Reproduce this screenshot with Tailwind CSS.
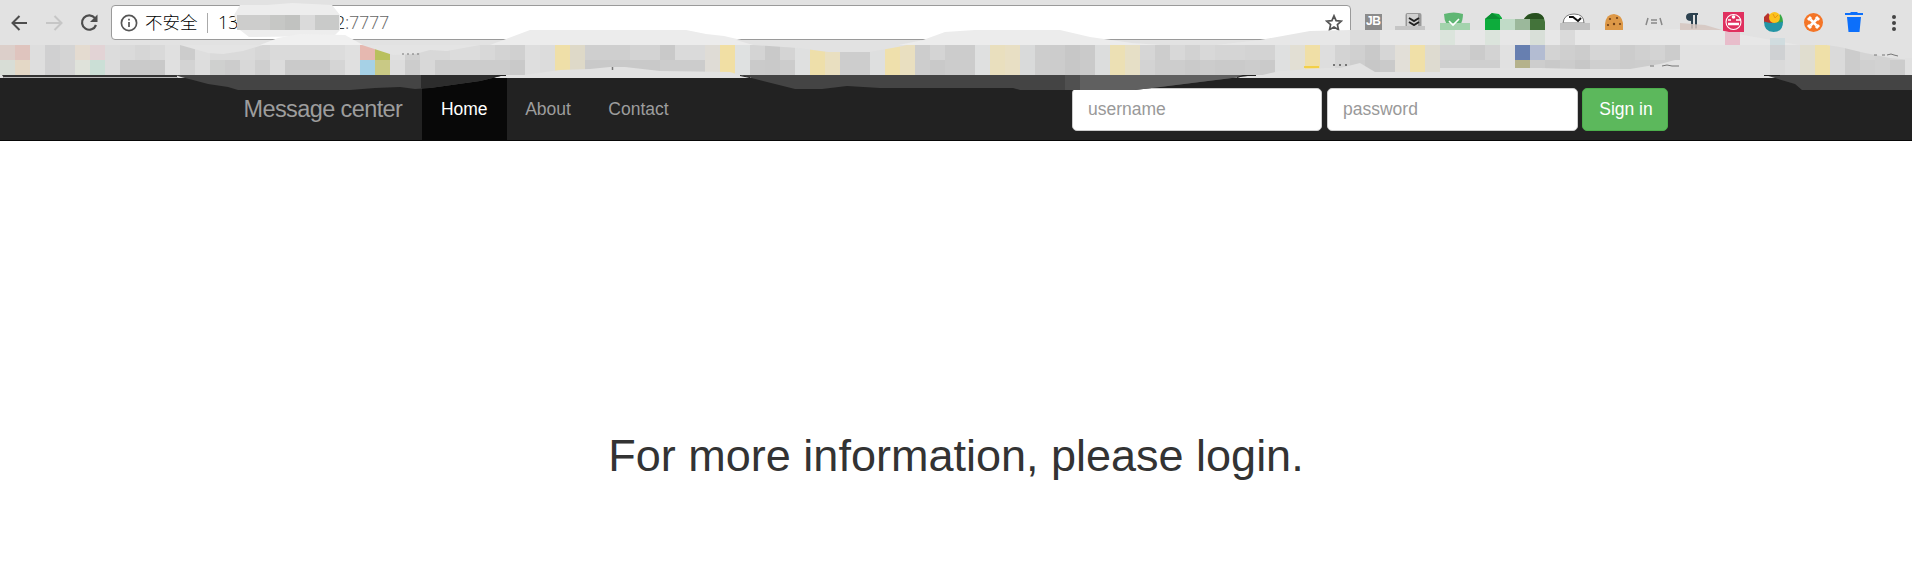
<!DOCTYPE html>
<html lang="en">
<head>
<meta charset="utf-8">
<title>Message center</title>
<script src="https://cdn.jsdelivr.net/npm/@tailwindcss/browser@4"></script>
</head>
<body class="relative h-[565px] w-[1912px] overflow-hidden bg-white font-['Liberation_Sans',sans-serif] text-[17.5px] text-[#333]">
<header class="flex h-[78px] items-start bg-[#e2e2e2] pt-[5px]">
  <div class="flex h-[35px] w-[111px] items-center gap-[15px] pl-[9px]">
    <svg class="size-5" viewBox="0 0 20 20" fill="none" stroke="#4d4d4d" stroke-width="2"><path d="M18 10H4M10.500 3 3.500 10l7 7"/></svg>
    <svg class="size-5" viewBox="0 0 20 20" fill="none" stroke="#c6c6c6" stroke-width="2"><path d="M2 10h15M10.500 3l7 7-7 7"/></svg>
    <svg class="size-5" viewBox="0 0 20 20" fill="none" stroke="#4d4d4d" stroke-width="2.200"><path d="M16 5.200A7.200 7.200 0 1 0 17 12"/><path d="M18.500 1.500v7.500H11z" fill="#4d4d4d" stroke="none"/></svg>
  </div>
  <div class="flex h-[35px] w-[1240px] items-center rounded border border-[#9a9a9a] bg-white pr-[7px] pl-[8px]">
    <svg class="size-[18px]" viewBox="0 0 18 18" fill="none" stroke="#555" stroke-width="1.700"><circle cx="9" cy="9" r="7.600"/><path d="M9 8v5M9 4.800v1.800"/></svg>
    <span class="ml-[7px] w-[54px] font-['Noto_Sans_CJK_SC',sans-serif] text-[17.5px] font-light whitespace-nowrap text-black">不安全</span>
    <span class="ml-[8px] h-5 w-px bg-[#aaa]"></span>
    <span class="ml-[10px] w-[117px] font-['Open_Sans',sans-serif] text-[18px] font-light text-black">13</span>
    <span class="font-['Open_Sans',sans-serif] text-[18px] font-light tracking-[-0.3px] text-black">2<span class="text-[#666]">:7777</span></span>
    <svg class="ml-auto size-[18px]" viewBox="0 0 18 18" fill="none" stroke="#555" stroke-width="1.700"><path d="m9 1.800 2.100 4.800 5.200.5-3.900 3.500 1.100 5.200L9 13.100l-4.500 2.700 1.100-5.200-3.900-3.500 5.200-.5z"/></svg>
  </div>
</header>

<nav class="flex h-[64px] border-b border-white bg-[#222] pl-[243.5px] text-[#9d9d9d] shadow-[inset_0_-1px_0_#080808]">
  <a class="flex w-[178px] items-center text-[23.5px] tracking-[-0.6px] whitespace-nowrap">Message center</a>
  <a class="flex w-[85.5px] items-center justify-center bg-[#080808] text-white">Home</a>
  <a class="flex w-[82px] items-center justify-center">About</a>
  <a class="flex w-[99px] items-center justify-center">Contact</a>
  <form class="ml-[384px] flex items-start gap-[5px] pt-[10px]">
    <input class="h-[43px] w-[250px] rounded-[5px] border border-[#ccc] bg-white px-[15px] placeholder:text-[#999]" placeholder="username">
    <input class="h-[43px] w-[251px] rounded-[5px] border border-[#ccc] bg-white px-[15px] placeholder:text-[#999]" placeholder="password">
    <button type="button" class="-ml-px h-[43px] w-[86px] rounded-[5px] border border-[#4cae4c] bg-[#5cb85c] pl-[2px] text-white">Sign in</button>
  </form>
</nav>

<main class="flex justify-center pt-[289px]">
  <h1 class="text-[45px] leading-[50px] whitespace-nowrap">For more information, please login.</h1>
</main>

<svg class="pointer-events-none absolute top-0 left-0 h-[145px] w-[1912px]" viewBox="0 0 1912 145">
  <!-- extension icons -->
  <g>
    <rect x="1365" y="14" width="17" height="16" fill="#8b8b8b"/>
    <text x="1366" y="24.500" font-size="12" font-weight="700" fill="#fff" textLength="15">JB</text>
    <rect x="1405.500" y="13" width="16" height="17" rx="2" fill="#999"/><rect x="1407" y="14" width="11" height="15" fill="#d0d0d0"/>
    <path d="m1409 18 5 3 5-3m-10 4 5 3 5-3" fill="none" stroke="#222" stroke-width="2"/>
    <path d="M1444 14q10-3 19 0 0 7-3 11h-13q-3-5-3-11" fill="#5fb673"/>
    <path d="M1485 30V19l7-6 7 1 3 4v12z" fill="#0dac3c"/><path d="M1485 19h16l-9-6z" fill="#0a8e32"/>
    <path d="M1524 20q2-7 11-7t10 9v8h-15v-10z" fill="#43733a"/><path d="M1524 19q4-6 12-6 7 1 8 6z" fill="#28501f"/>
    <path d="M1563 23q1-9 11-9t10 9z" fill="#fff" stroke="#777"/><path d="m1569 17 4 0 5 4 3-3" fill="none" stroke="#111" stroke-width="2"/>
    <path d="M1605 30v-6q1-10 9-10 8 1 9 9v7z" fill="#dd9847"/><g fill="#704018"><circle cx="1610" cy="19" r="1.100"/><circle cx="1617" cy="18" r="1.100"/><circle cx="1614" cy="24" r="1.200"/><circle cx="1620" cy="24" r="1.100"/><circle cx="1608" cy="25" r="1.100"/></g>
    <path d="m1648 18-2 7m14-7 2 7m-11-5h6m-6 3h6" fill="none" stroke="#888" stroke-width="1.500"/>
    <path d="M1698 13h-7q-5 0-5 4t5 4v8h2V15h2v14h2V15h1z" fill="#2d4250"/>
    <rect x="1723" y="12" width="21" height="20" fill="#e0305f"/><circle cx="1733.500" cy="22" r="7.500" fill="none" stroke="#fff" stroke-width="1.100"/><path d="M1728 20h3m5 0h4" stroke="#fff" stroke-width="1.300"/><path d="M1728 24h11" stroke="#fff" stroke-width="2.500"/><circle cx="1733.500" cy="17" r="1.800" fill="#fff"/>
    <path d="M1764 23v-6l4-4 9 10z" fill="#b9332d"/><path d="M1775 23l5-9q3 3 3 9z" fill="#37a843"/><circle cx="1774.500" cy="17.500" r="5.500" fill="#fcc21c"/><path d="M1773 14l2 4 3-3" fill="none" stroke="#e99513"/><path d="M1764 21.500q10 3 19 0 0 10.500-9.500 10.500t-9.500-10.500" fill="#2395a5"/>
    <circle cx="1813.500" cy="22.500" r="9.500" fill="#f47527"/><path d="m1808 20 3-3m5 0 3 3m0 5-3 3m-5 0-3-3" stroke="#fff" stroke-width="3"/><path d="m1810.500 19.500 6 6m0-6-6 6" stroke="#fff" stroke-width="2.500"/>
    <path d="M1845 13h5l1-1h6l1 1h5v2h-18zM1847 17h14l-1.500 15h-11z" fill="#0c6ffb"/>
    <g fill="#444"><circle cx="1894" cy="17" r="2"/><circle cx="1894" cy="23" r="2"/><circle cx="1894" cy="29" r="2"/></g>
  </g>
  <!-- pixelated bookmark row, filled by the script below -->
  <g id="mosaic" shape-rendering="crispEdges"></g>
  <!-- smudges over the bookmark row and address -->
  <path d="M234 15 240 5h27l25-2 40 2 8 10v15l-6 6-85 1-9-7z" fill="#ededed"/>
  <g shape-rendering="crispEdges"><path d="M237 15h48v15h-48z" fill="#cdcdcc"/><path d="M270 15h15v15h-15z" fill="#c6c7c5"/><path d="M285 15h15v15h-15z" fill="#c1c2c0"/><path d="M300 15h15v15h-15z" fill="#dadada"/><path d="M315 15h24v15h-24z" fill="#c9cac9"/></g>
  <path d="M260 45 278 38 300 34l45 1 18 10z" fill="#f0f0f0"/>
  <path d="M180 45h83l-20 6-20 3-15-1zM362 45h118l-33 6-17-1-15 4-22 1z" fill="#e4e4e4"/>
  <path d="M490 45 530 30h156l20 4 18 2 26 6 28 3z" fill="#ececec"/>
  <path d="M736 40h187l-20 6-33 6-42 0-30-4-45-3z" fill="#e2e2e2"/>
  <path d="M898 45 923 40l22-8 30-2h85l30 7 42 6 30 2z" fill="#ececec"/>
  <path d="M1215 45 1260 40l50-9 40-1h299l60-2 40 8 50 9z" fill="#e7e7e7"/>
  <g shape-rendering="crispEdges">
    <path d="M1350 30h30v15h-30z" fill="#dcdcdc"/><path d="M1395 26h30v4h-30z" fill="#c5c5c5"/>
    <path d="M1440 23h30v7h-30z" fill="#a4d3ad"/><path d="M1440 30h15v15h-15zM1485 30h15v15h-15z" fill="#dbe4dc"/>
    <path d="M1500 19h15v11h-15z" fill="#c0dbc7"/><path d="M1515 19h15v11h-15z" fill="#9bb89b"/><path d="M1530 30h15v15h-15z" fill="#d8dfd8"/>
    <path d="M1560 23h30v7h-30z" fill="#c2c2c2"/><path d="M1560 30h15v15h-15z" fill="#dadada"/><path d="M1725 32h15v13h-15z" fill="#e8bdcb"/><path d="M1770 38h15v7h-15z" fill="#d0dcdf"/>
  </g>
  <path d="m1449 21 4 4 6-6" fill="none" stroke="#fff" stroke-width="1.600"/>
  <path d="M1680 23l25 2 17 5h-42z" fill="#d5c5c0" fill-opacity="0.850"/>
  <path d="M524 78V75l36-5 30-1 20-2 15 0 35 4 70 1 20 6z" fill="#e2e2e2"/>
  <path d="M1250 78l30-7 45-3h15l20-5 15 9h65v-4h100l40 1h50l30-5 15-4h95v18z" fill="#e2e2e2"/>
  <path d="M1820 44l20 3 25 6 25 5 22 2V44z" fill="#e2e2e2"/>
  <path d="M1905 58h7v17h-7z" fill="#e0e0e0"/>
  <g stroke="#777" fill="none">
    <path d="M402 54h18" stroke-dasharray="2 3"/><path d="M612.500 67v3" stroke-width="1.500"/><path d="M1333 65h18" stroke="#555" stroke-width="1.500" stroke-dasharray="2 4"/>
    <path d="M1650 66h4m8 0 5-1 5 1h7M1874 55h3m5 0h3m2 0 4-1 3 1 4 1"/><path d="M1304 67h15" stroke="#f4cb28" stroke-width="1.500"/>
  </g>
  <path d="M2 75h175v3H4z" fill="#333"/><path d="M4 77.500h174" stroke="#bbb"/>
  <path d="M175 75H505l-25 6-50 7-15 1-15-2-25 1-25 2H238l-10-3-20-3-15-4-12-3z" fill="#444"/>
  <path d="M421 75h84l-25 6-50 7-9 0z" fill="#2c2c2c"/>
  <path d="M740 75h515l-15 2-80 10-25 3h-115l-7-2H880l-33-2-25 3h-27l-20-5z" fill="#444"/>
  <path d="M1065 75h15v15h-15z" fill="#505050"/><path d="M1080 75h175l-15 2-80 10-25 3h-55z" fill="#606060"/>
  <path d="M1765 75h147v15h-110l-7-6-20-6z" fill="#444"/>
  <path d="M493 77.500l5-2h8m234 0 10 2m487 0 6-2h13m508 0h16" stroke="#222" fill="none"/>
</svg>
<script>
  // Each row: "count:colour" runs of 15px cells starting at x = 0.
  const rows = [
    "1:dccfca 1:dfc4be 1:dedede 1:d0d0d1 1:d4d4d4 1:e4dbd0 1:e2d3d5 1:dcdcdc 1:dadada 1:d6d6d6 1:d9d9d9 1:e0e0e0 1:cccccc 1:dedede 3:dadada 1:d6d6d6 4:dadada 1:dcdcdc 1:e0e0e0 1:e6b8b0 1:b9c05d 1:e0e0e0 1:d0d0d0 2:d8d8d8 2:dcdcdc 1:d8d8d8 1:d3d3d3 1:d0d0d0 1:dedede 1:dcdcdc 1:efdfa8 1:ded9c8 3:cfcfcf 2:d3d3d3 1:c9c9c9 2:dadada 1:dfdcd6",
    "1:d8ddd6 1:e4d8c6 1:dedede 1:d0d0d1 1:d4d4d4 1:dfe2da 1:cbdfd6 1:dcdcdc 2:cacaca 1:c9c9c9 1:e0e0e0 1:d3d3d3 1:dddddd 1:cfd0cf 1:cccccc 1:d8d8d8 1:cfcfcf 1:dcdcdc 3:cacaca 1:d5d5d5 1:e0e0e0 1:a6d1e6 1:c9c985 1:dddddd 1:cccccc 1:d8d8d8 5:cccccc 1:c9c9c9 1:dedede 1:dcdcdc 1:efdfa8 1:ded9c8 5:c9c9c9 3:cccccc 1:dfdcd6"
  ];
  // Individually placed cells: x, top row colour, bottom row colour.
  const cells = [[720,"f1dfa4","f1dfa4"],[735,"dfe1e1","dfe1e1"],[750,"d4d4d4","cacaca"],[765,"c9c9c9","c9c9c9"],[780,"d4d4d4","cccccc"],[795,"dfe0e0","dfe0e0"],[810,"eedfaa","eedfaa"],[825,"e9dfc0","e9dfc0"],[840,"cdcdcd","cdcdcd"],[855,"cdcdcd","cdcdcd"],[870,"dedfdf","dedfdf"],[885,"efe0ac","efe0ac"],[900,"e9dfc0","e9dfc0"],[915,"cdcdcd","cdcdcd"],[930,"d4d4d4","c9c9c9"],[945,"cccccc","cccccc"],[960,"cccccc","cccccc"],[975,"dfe0e0","dfe0e0"],[990,"e9dfbe","e9dfbe"],[1005,"e8dfc4","e8dfc4"],[1020,"d9dada","d9dada"],[1035,"cdcdcd","cdcdcd"],[1050,"cccccc","cccccc"],[1065,"c7c7c7","c7c7c7"],[1080,"cacaca","cacaca"],[1095,"dcdddd","dcdddd"],[1110,"ece0b4","ece0b4"],[1125,"e6dfc6","e6dfc6"],[1140,"d6d6d6","d3d3d3"],[1155,"cdcdcd","cdcdcd"],[1170,"d8d8d8","cdcdcd"],[1185,"d2d2d2","cacaca"],[1200,"d8d8d8","cccccc"],[1215,"d5d5d5","cacaca"],[1230,"d5d5d5","cacaca"],[1245,"d3d3d3","cccccc"],[1260,"d3d3d3","cacaca"],[1275,"dfe0e0","dfe0e0"],[1290,"e2dfd4","e2dfd4"],[1305,"f0dfa6","f0dfa6"],[1320,"dedede","dedede"],[1335,"d3d3d3","d5d5d5"],[1350,"d0d0d0","cdcdcd"],[1365,"c9c9c9","c7c7c7"],[1380,"d6d6d6","cacaca"],[1395,"e2dfd8","e2dfd8"],[1410,"f0e0a8","f0e0a8"],[1425,"dedbd0","dedbd0"],[1440,"d3d3d3","cfcfcf"],[1455,"d3d3d3","cfcfcf"],[1470,"cbcbcb","cfcfcf"],[1485,"d3d3d3","cfcfcf"],[1500,"e1e1e1","e1e1e1"],[1515,"677fb0","b5b28c"],[1530,"b3bcd2","cdcdcd"],[1545,"d3d3d3","c9c9c9"],[1560,"cfcfcf","cccccc"],[1575,"cccccc","c7c7c7"],[1590,"d6d6d6","cfcfcf"],[1605,"d6d6d6","cfcfcf"],[1620,"cccccc","cccccc"],[1635,"d0d0d0","cdcdcd"],[1650,"d3d3d3","cdcdcd"],[1665,"cccccc","cccccc"],[1770,"cfd1d3","dadada"],[1785,"dedede","dedede"],[1800,"e0ddcf","e0ddcf"],[1815,"efe0a8","efe0a8"],[1830,"dadada","dadada"],[1845,"cccccc","cccccc"],[1860,"d4d4d4","d0d0d0"],[1875,"d2d2d2","d2d2d2"],[1890,"d6d6d6","cccccc"]];
  const mosaic = document.getElementById("mosaic");
  function cell(x, y, w, colour) {
    const r = document.createElementNS("http://www.w3.org/2000/svg", "rect");
    r.setAttribute("x", x); r.setAttribute("y", y);
    r.setAttribute("width", w); r.setAttribute("height", 15);
    r.setAttribute("fill", "#" + colour);
    mosaic.appendChild(r);
  }
  rows.forEach((row, i) => {
    let x = 0;
    for (const run of row.split(" ")) {
      const [n, colour] = run.split(":");
      if (x < 720) cell(x, 45 + i * 15, n * 15, colour);
      x += n * 15;
    }
  });
  for (const [x, a, b] of cells) { cell(x, 45, 15, a); cell(x, 60, 15, b); }
</script>
</body>
</html>
